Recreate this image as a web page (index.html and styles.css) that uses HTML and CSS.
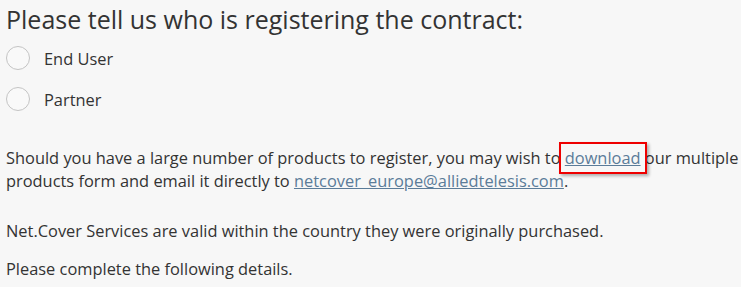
FILE: index.html
```html
<!DOCTYPE html>
<html lang="en">
<head>
<meta charset="utf-8">
<title>Register contract</title>
<link rel="stylesheet" href="styles.css">
</head>
<body>
<main class="page">
  <h2 class="title">Please tell us who is registering the contract:</h2>
  <div class="options">
    <label class="option"><span class="radio"></span><span class="option-text">End User</span></label>
    <label class="option"><span class="radio"></span><span class="option-text">Partner</span></label>
  </div>
  <p class="para first">Should you have a large number of products to register, you may wish to <span class="hl"><a href="#" class="link">download</a></span> our multiple products form and email it directly to <a href="#" class="link">netcover_europe@alliedtelesis.com</a>.</p>
  <p class="para second">Net.Cover Services are valid within the country they were originally purchased.</p>
  <p class="para third">Please complete the following details.</p>
</main>
</body>
</html>
```
FILE: styles.css
```css
html, body {
  margin: 0;
  padding: 0;
  background: #f7f7f7;
}
body {
  font-family: "Open Sans", "Liberation Sans", sans-serif;
  color: #333333;
}
.page {
  padding: 0 1px 0 6px;
}
.title {
  margin: 0;
  font-weight: 400;
  font-size: 25px;
  line-height: 38px;
  color: #333333;
}
.options {
  display: flex;
  flex-direction: column;
  gap: 17px;
  margin-top: 8px;
}
.option {
  display: flex;
  align-items: center;
  gap: 14px;
  height: 24px;
  font-size: 16.4px;
}
.radio {
  box-sizing: border-box;
  width: 24px;
  height: 24px;
  border: 1px solid #c4c4c4;
  border-radius: 50%;
  background: #f9f9f9;
}
.para {
  margin: 0;
  font-size: 16.4px;
  line-height: 23px;
}
.para.first {
  margin-top: 35px;
}
.para.second {
  margin-top: 27px;
}
.para.third {
  margin-top: 15px;
}
.link {
  color: #5b7c99;
  text-decoration: underline;
}
.hl {
  position: relative;
}
.hl::after {
  content: "";
  position: absolute;
  left: -6px;
  right: -6px;
  top: -4px;
  bottom: -5px;
  border: 2px solid #ee0000;
  box-shadow: 2px 2px 3px rgba(0,0,0,0.3);
  pointer-events: none;
}
```
